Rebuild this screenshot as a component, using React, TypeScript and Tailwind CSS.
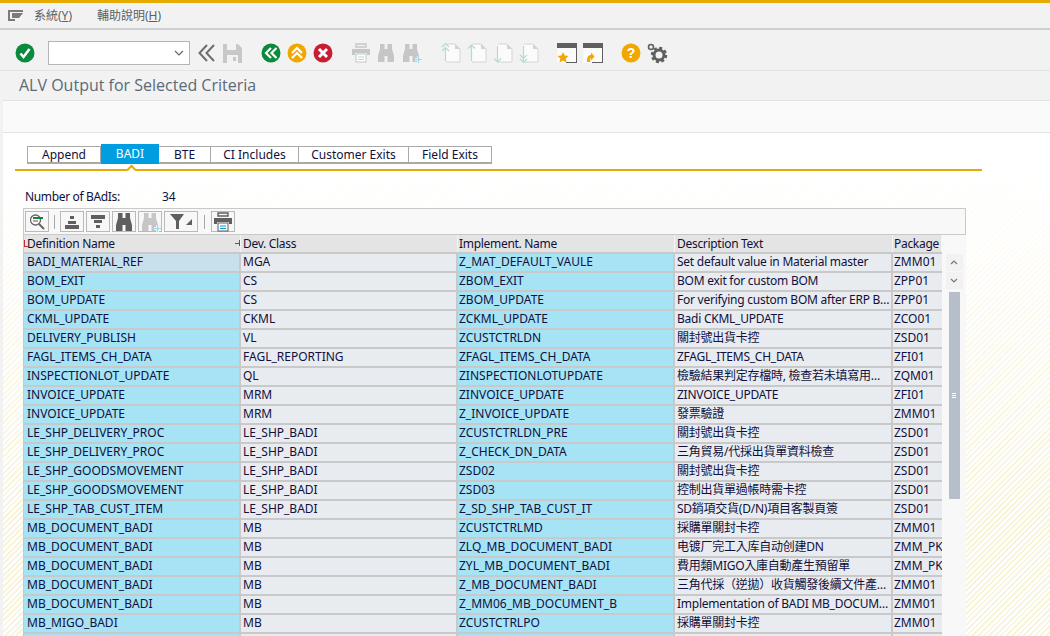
import React from "react";

const rows: [string, string, string, string, string][] = [
  ["BADI_MATERIAL_REF", "MGA", "Z_MAT_DEFAULT_VAULE", "Set default value in Material master", "ZMM01"],
  ["BOM_EXIT", "CS", "ZBOM_EXIT", "BOM exit for custom BOM", "ZPP01"],
  ["BOM_UPDATE", "CS", "ZBOM_UPDATE", "For verifying custom BOM after ERP B…", "ZPP01"],
  ["CKML_UPDATE", "CKML", "ZCKML_UPDATE", "Badi CKML_UPDATE", "ZCO01"],
  ["DELIVERY_PUBLISH", "VL", "ZCUSTCTRLDN", "關封號出貨卡控", "ZSD01"],
  ["FAGL_ITEMS_CH_DATA", "FAGL_REPORTING", "ZFAGL_ITEMS_CH_DATA", "ZFAGL_ITEMS_CH_DATA", "ZFI01"],
  ["INSPECTIONLOT_UPDATE", "QL", "ZINSPECTIONLOTUPDATE", "檢驗結果判定存檔時, 檢查若未填寫用…", "ZQM01"],
  ["INVOICE_UPDATE", "MRM", "ZINVOICE_UPDATE", "ZINVOICE_UPDATE", "ZFI01"],
  ["INVOICE_UPDATE", "MRM", "Z_INVOICE_UPDATE", "發票驗證", "ZMM01"],
  ["LE_SHP_DELIVERY_PROC", "LE_SHP_BADI", "ZCUSTCTRLDN_PRE", "關封號出貨卡控", "ZSD01"],
  ["LE_SHP_DELIVERY_PROC", "LE_SHP_BADI", "Z_CHECK_DN_DATA", "三角貿易/代採出貨單資料檢查", "ZSD01"],
  ["LE_SHP_GOODSMOVEMENT", "LE_SHP_BADI", "ZSD02", "關封號出貨卡控", "ZSD01"],
  ["LE_SHP_GOODSMOVEMENT", "LE_SHP_BADI", "ZSD03", "控制出貨單過帳時需卡控", "ZSD01"],
  ["LE_SHP_TAB_CUST_ITEM", "LE_SHP_BADI", "Z_SD_SHP_TAB_CUST_IT", "SD銷項交貨(D/N)項目客製頁簽", "ZSD01"],
  ["MB_DOCUMENT_BADI", "MB", "ZCUSTCTRLMD", "採購單關封卡控", "ZMM01"],
  ["MB_DOCUMENT_BADI", "MB", "ZLQ_MB_DOCUMENT_BADI", "电镀厂完工入库自动创建DN", "ZMM_PKG"],
  ["MB_DOCUMENT_BADI", "MB", "ZYL_MB_DOCUMENT_BADI", "費用類MIGO入庫自動產生預留單", "ZMM_PKG"],
  ["MB_DOCUMENT_BADI", "MB", "Z_MB_DOCUMENT_BADI", "三角代採（逆拋）收貨觸發後續文件產…", "ZMM01"],
  ["MB_DOCUMENT_BADI", "MB", "Z_MM06_MB_DOCUMENT_B", "Implementation of BADI MB_DOCUM…", "ZMM01"],
  ["MB_MIGO_BADI", "MB", "ZCUSTCTRLPO", "採購單關封卡控", "ZMM01"],
  ["", "", "", "", ""],
];

const Circle = ({ fill, children, className = "" }: { fill: string; children: React.ReactNode; className?: string }) => (
  <svg width="20" height="20" viewBox="0 0 20 20" className={className}>
    <circle cx="10" cy="10" r="9.5" fill={fill} />
    {children}
  </svg>
);

const Doc = ({ dir, dbl }: { dir: "up" | "down"; dbl?: boolean }) => (
  <svg width="20" height="22" viewBox="0 0 20 22">
    <path d="M5 2h9l5 5v13H5" fill="#fbfbfb" stroke="#d4d4d4" strokeWidth="1" />
    <path d="M14 2v5h5z" fill="#d4d4d4" />
    {dir === "up" ? (
      <path d={dbl ? "M4.5 6v13M1 9l3.5-3.5L8 9M1 5l3.5-3.5L8 5" : "M4.5 3v16M1 6.5l3.5-3.5L8 6.5"} stroke="#b5dcc6" strokeWidth="1.2" fill="none" />
    ) : (
      <path d={dbl ? "M4.5 4v15M1 13l3.5 3.5L8 13M1 17l3.5 3.5L8 17" : "M4.5 4v16M1 16.5L4.5 20L8 16.5"} stroke="#b5dcc6" strokeWidth="1.2" fill="none" />
    )}
  </svg>
);

const Binoc = ({ c = "#c6c6c6", plus }: { c?: string; plus?: boolean }) => (
  <svg width="20" height="20" viewBox="0 0 20 20" className="overflow-visible">
    <path d="M4 1h4.500v5h3V1H16v5l2 7v6h-6.500v-6h-3v6H2v-6l2-7z" fill={c} />
    {plus && (
      <>
        <path d="M14 16.500h7M17.500 13v7" stroke="#f2f2f2" strokeWidth="3" fill="none" />
        <path d="M14 16.500h7M17.500 13v7" stroke="#9fd8f6" strokeWidth="1.200" fill="none" />
      </>
    )}
  </svg>
);

const Printer = ({ c = "#c6c6c6", b = "#a9dcf7" }: { c?: string; b?: string }) => (
  <svg width="20" height="20" viewBox="0 0 20 20">
    <path d="M5 1h10v3H5z" fill="none" stroke={c} strokeWidth="1.4" />
    <path d="M1 6h18v6h-3v-2H4v2H1z" fill={c} />
    <rect x="5" y="11" width="10" height="8" fill="#fff" stroke={c} />
    <path d="M7 14h6M7 16.500h6" stroke={b} strokeWidth="1.200" />
  </svg>
);

const Win = ({ children }: { children: React.ReactNode }) => (
  <svg width="20" height="21" viewBox="0 0 20 21">
    <rect x="0.5" y="0.5" width="19" height="19.500" fill="#fbfbfb" />
    <path d="M0 0h20v5H0zM19 5h1v15h-11v-1h10z" fill="#5f5f5f" />
    {children}
  </svg>
);

const TB = ({ children }: { children: React.ReactNode }) => (
  <button className="w-6 h-[21px] border border-[#b9b9b9] bg-[#f7f7f7] flex items-center justify-center">{children}</button>
);

const Cell = ({ w, bg, children }: { w: string; bg: string; children?: React.ReactNode }) => (
  <div className={`${w} ${bg} h-full shrink-0 border-r-2 border-[#c9c9c9] overflow-hidden whitespace-nowrap leading-[16px]`}>{children}</div>
);

export default function App() {
  return (
    <div
      className="w-[1050px] h-[636px] overflow-hidden flex flex-col bg-[#f2f2f2] text-[12px] text-[#10103c]"
      style={{ fontFamily: '"Noto Sans","Noto Sans CJK TC",sans-serif' }}
    >
      <div className="h-[3px] shrink-0 bg-[#e5ab00]" />
      {/* menu */}
      <div className="h-[27px] shrink-0 flex items-center border-b-2 border-[#cfcfcf] bg-[#f2f2f2] pl-[8px] text-[#5f5f5f] text-[12px]">
        <svg width="15" height="11" viewBox="0 0 15 11" className="mr-[11px]">
          <path d="M0 0h15v2H2v7h5v2H0zM4 3h11l-4 5H4z" fill="#7a7a7a" />
        </svg>
        <span className="w-[63px]">系統(<u>Y</u>)</span>
        <span>輔助說明(<u>H</u>)</span>
      </div>
      {/* toolbar */}
      <div className="h-[40px] shrink-0 flex items-center bg-[#f2f2f2] pl-[15px] pt-[6px]">
        <Circle fill="#0a8a3c"><path d="M5.500 10.500l3 3.500 6-8" stroke="#fff" strokeWidth="2.600" fill="none" /></Circle>
        <div className="ml-[13px] w-[142px] h-[24px] border border-[#b5b5b5] bg-white flex items-center justify-end pr-[5px]">
          <svg width="10" height="6" viewBox="0 0 10 6"><path d="M1 1l4 4 4-4" stroke="#666" strokeWidth="1.200" fill="none" /></svg>
        </div>
        <svg width="18" height="18" viewBox="0 0 18 18" className="ml-[8px]">
          <path d="M9 1L1.500 9 9 17M16 1L8.500 9 16 17" stroke="#6e6e6e" strokeWidth="2" fill="none" />
        </svg>
        <svg width="19" height="19" viewBox="0 0 19 19" className="ml-[7px]">
          <path d="M0 0h15l4 4v15H0z" fill="#c8c8c8" />
          <path d="M4 0h9v6H4z" fill="#f2f2f2" />
          <path d="M4 11h11v8H4z" fill="#f2f2f2" />
          <path d="M10 13h3v4h-3z" fill="#c8c8c8" />
        </svg>
        <Circle fill="#0a8a3c" className="ml-[19px]"><path d="M10 5l-5 5 5 5M15.500 5l-5 5 5 5" stroke="#fff" strokeWidth="2.200" fill="none" /></Circle>
        <Circle fill="#f0a800" className="ml-[6px]"><path d="M5 10l5-5 5 5M5 15l5-5 5 5" stroke="#fff" strokeWidth="2.200" fill="none" /></Circle>
        <Circle fill="#c81e32" className="ml-[6px]"><path d="M6 6l8 8M14 6l-8 8" stroke="#fff" strokeWidth="3" fill="none" /></Circle>
        <div className="ml-[18px]"><Printer /></div>
        <div className="ml-[5px]"><Binoc /></div>
        <div className="ml-[5px]"><Binoc plus /></div>
        <div className="ml-[20px] flex gap-[6px]">
          <Doc dir="up" dbl />
          <Doc dir="up" />
          <Doc dir="down" />
          <Doc dir="down" dbl />
        </div>
        <div className="ml-[18px]">
          <Win><path d="M6 9l1.700 3.600 3.800.4-2.800 2.600.8 3.900L6 17.600 2.500 19.500l.8-3.900L.5 13l3.800-.4z" fill="#f0a800" /></Win>
        </div>
        <div className="ml-[6px]">
          <Win><path d="M4 19c0-5 1-7 4-7V9.500l3.500 4-3.500 4V15c-1 0-1 2-.5 4z" fill="#f0a800" /></Win>
        </div>
        <div className="ml-[18px]">
          <Circle fill="#f0a800">
            <text x="10" y="15" textAnchor="middle" fontSize="14" fontWeight="700" fill="#fff" fontFamily="Liberation Sans">?</text>
          </Circle>
        </div>
        <svg width="21" height="21" viewBox="0 0 21 21" className="ml-[6px]">
          <circle cx="4" cy="4" r="2.500" fill="none" stroke="#5f5f5f" strokeWidth="1.600" />
          <circle cx="12" cy="12" r="5" fill="none" stroke="#5f5f5f" strokeWidth="3" />
          <circle cx="12" cy="12" r="7" fill="none" stroke="#5f5f5f" strokeWidth="2.500" strokeDasharray="3 2.500" />
        </svg>
      </div>
      {/* title */}
      <div className="h-[30px] shrink-0 flex items-center border-t border-[#e4e4e4] pl-[19px] pb-[2px] text-[16px] text-[#5a6a78] bg-[#f2f2f2]" style={{ fontFamily: '"Open Sans","Noto Sans",sans-serif' }}>
        ALV Output for Selected Criteria
      </div>
      <div className="h-[33px] shrink-0 border-t border-b border-[#e2e2e2] bg-[#fafafa] ml-[3px]" />
      {/* content */}
      <div className="flex-1 ml-[3px] relative bg-[linear-gradient(to_bottom,rgba(255,255,255,1)_6%,rgba(255,255,255,0.1)_75%),repeating-linear-gradient(135deg,#f8f3d8_0,#f8f3d8_2px,#ffffff_2px,#ffffff_4px)] overflow-hidden">
        {/* tabs */}
        <div className="ml-[24px] mt-[13px] flex h-[18px] items-stretch leading-[16px]">
          {[["Append", "w-[74px]"], ["BADI", "w-[58px]"], ["BTE", "w-[52px]"], ["CI Includes", "w-[88px]"], ["Customer Exits", "w-[110px]"], ["Field Exits", "w-[83px]"]].map(([t, w], i) =>
            i === 1 ? (
              <div key={t} className={`${w} shrink-0 bg-[#009de0] text-white text-center h-[20px] -mt-[2px] pt-[2px]`}>{t}</div>
            ) : (
              <div key={t} className={`${w} shrink-0 border-t border-r border-[#a9a9a9] ${i === 0 ? "border-l" : ""} text-center bg-white border-b-2`}>{t}</div>
            )
          )}
        </div>
        <div className="relative ml-[12px] w-[967px] mt-[5px] h-[2px] bg-[#e5ab00]">
          <div className="absolute left-[113px] -top-[3px] w-[7px] h-[7px] bg-white border-l-2 border-t-2 border-[#e5ab00] rotate-45" />
        </div>
        {/* number */}
        <div className="ml-[22px] mt-[18px] flex h-[16px] leading-[16px]">
          <span className="w-[137px] tracking-[-0.35px]">Number of BAdIs:</span>
          <span>34</span>
        </div>
        {/* grid */}
        <div className="ml-[20px] mt-[3px] w-[943px] border border-b-0 border-[#c9c9c9] bg-[#f8f8f8]">
          <div className="h-[25px] flex items-center gap-[2px] pl-[1px]">
            <TB>
              <svg width="17" height="17" viewBox="0 0 17 17"><circle cx="6.500" cy="7" r="5" fill="#fff" stroke="#666" strokeWidth="1.300" /><path d="M10 11l5 5" stroke="#666" strokeWidth="2" /><path d="M4 5h10" stroke="#0a8a3c" strokeWidth="2" /><path d="M4 8h5" stroke="#c81e32" strokeWidth="1" /></svg>
            </TB>
            <div className="w-px h-[14px] bg-[#a8a8a8] mx-[3px]" />
            <TB>
              <svg width="16" height="14" viewBox="0 0 16 14"><path d="M6 1h4v3H6zM4 6h8v3H4zM1 10h14v4H1z" fill="#5f5f5f" /></svg>
            </TB>
            <TB>
              <svg width="16" height="14" viewBox="0 0 16 14"><path d="M1 0h14v4H1zM4 5h8v3H4zM6 10h4v3H6z" fill="#5f5f5f" /></svg>
            </TB>
            <TB><Binoc c="#5f5f5f" /></TB>
            <TB><Binoc plus /></TB>
            <button className="w-[34px] h-[21px] border border-[#b9b9b9] bg-[#f7f7f7] flex items-center justify-center gap-[2px]">
              <svg width="14" height="15" viewBox="0 0 14 15"><path d="M0 0h14L9 7v8H6V7z" fill="#5f5f5f" /></svg>
              <svg width="6" height="6" viewBox="0 0 6 6"><path d="M6 0v6H0z" fill="#5f5f5f" /></svg>
            </button>
            <div className="w-px h-[14px] bg-[#a8a8a8] mx-[4px]" />
            <TB><Printer c="#5f5f5f" b="#009de0" /></TB>
          </div>
          <div className="flex border-t border-[#c9c9c9] bg-white">
            <div className="w-[918px] shrink-0 overflow-hidden">
              {/* header */}
              <div className="relative flex h-[19px] bg-[#e4e4e4] border-b-2 border-[#c9c9c9] leading-[18px] text-[#10103c] tracking-[-0.3px]">
                {[["Definition Name", "w-[217px] pl-[3px]"], ["Dev. Class", "w-[217px] pl-[2px]"], ["Implement. Name", "w-[217px] pl-[1px]"], ["Description Text", "w-[218px] pl-[2px]"], ["Package", "w-[49px] pl-[1px]"]].map(([t, w]) => (
                  <div key={t} className={`${w} shrink-0 border-r border-[#f4f4f4] overflow-hidden whitespace-nowrap`}>{t}</div>
                ))}
                <div className="absolute left-0 top-[5px] w-[4px] h-[7px] border-l border-b border-[#c8282d]" />
                <div className="absolute left-[215px] top-[5px] w-px h-[6px] bg-[#c8282d]" />
                <div className="absolute left-[211px] top-[8px] w-[4px] h-px bg-[#c8282d]" />
              </div>
              {rows.map((r, i) => (
                <div key={i} className="flex h-[19px] border-b-2 border-[#c9c9c9]">
                  <Cell w="w-[217px] pl-[3px]" bg={i === 0 ? "bg-[#c8e0ec]" : "bg-[#a6e3f4]"}>{r[0]}</Cell>
                  <Cell w="w-[217px] pl-[2px]" bg="bg-[#e8ecf0]">{r[1]}</Cell>
                  <Cell w="w-[217px] pl-[1px]" bg="bg-[#a6e3f4]">{r[2]}</Cell>
                  <Cell w="w-[218px] pl-[2px] tracking-[-0.25px]" bg="bg-[#e8ecf0]">{r[3]}</Cell>
                  <Cell w="w-[51px] pl-[1px]" bg="bg-[#e8ecf0]">{r[4]}</Cell>
                </div>
              ))}
            </div>
            {/* scrollbar */}
            <div className="w-[24px] shrink-0 bg-[#f8f8f8] flex flex-col items-center pt-[19px]">
              <div className="w-[17px] h-[17px] bg-[#f2f2f2] flex items-center justify-center">
                <svg width="8" height="5" viewBox="0 0 8 5"><path d="M1 4l3-3 3 3" stroke="#777" strokeWidth="1.200" fill="none" /></svg>
              </div>
              <div className="w-[17px] h-[17px] mt-[1px] bg-[#f2f2f2] flex items-center justify-center">
                <svg width="8" height="5" viewBox="0 0 8 5"><path d="M1 1l3 3 3-3" stroke="#777" strokeWidth="1.200" fill="none" /></svg>
              </div>
              <div className="w-[11px] h-[207px] mt-[3px] bg-[#b6bfc9] flex flex-col items-center justify-center gap-px">
                <div className="w-[4px] h-px bg-white" />
                <div className="w-[4px] h-px bg-white" />
                <div className="w-[4px] h-px bg-white" />
              </div>
            </div>
          </div>
        </div>
      </div>
    </div>
  );
}
